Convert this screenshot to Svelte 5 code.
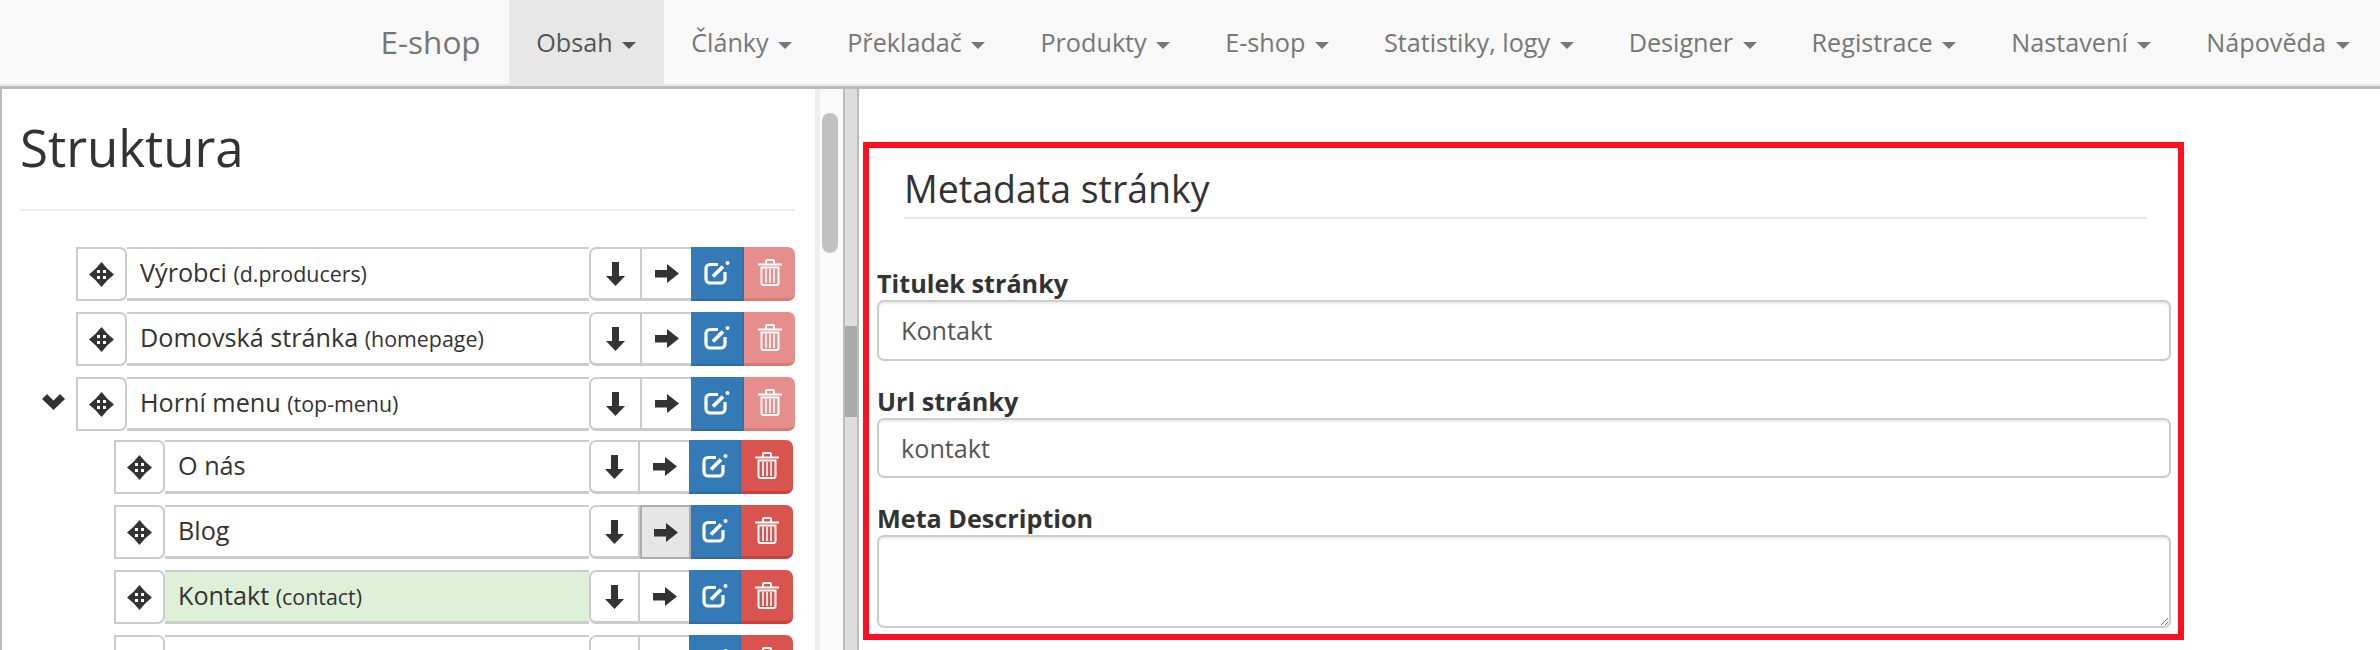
<script>
    const menu = ["Obsah", "Články", "Překladač", "Produkty", "E-shop", "Statistiky, logy", "Designer", "Registrace", "Nastavení", "Nápověda"];

    const topRows = [
        { name: "Výrobci", code: "d.producers" },
        { name: "Domovská stránka", code: "homepage" },
        { name: "Horní menu", code: "top-menu", open: true },
    ];

    const childRows = [
        { name: "O nás" },
        { name: "Blog", hover: true },
        { name: "Kontakt", code: "contact", active: true },
        { name: "" },
    ];
</script>

{#snippet row(item, locked)}
    <div class="row" class:locked>
        {#if item.open}
            <svg class="chevron" width="23" height="16" viewBox="0 0 23 16">
                <path d="M0 5 L5 0 L11.5 6.5 L18 0 L23 5 L11.5 16 Z" fill="#333" />
            </svg>
        {/if}
        <span class="handle">
            <svg width="25" height="25" viewBox="0 0 25 25">
                <path
                    d="M12.5 0 L19.5 8 H14 V11 H17 V5.5 L25 12.5 L17 19.5 V14 H14 V17 H19.5 L12.5 25 L5.5 17 H11 V14 H8 V19.5 L0 12.5 L8 5.5 V11 H11 V8 H5.5 Z"
                    fill="#333"
                />
            </svg>
        </span>
        <span class="name" class:active={item.active}>
            {item.name}
            {#if item.code}<small>({item.code})</small>{/if}
        </span>
        <span class="btn first">
            <svg width="19" height="24" viewBox="0 0 19 24">
                <path d="M6 0 H13 V14 H19 L9.5 24 L0 14 H6 Z" fill="#333" />
            </svg>
        </span>
        <span class="btn arrow" class:hover={item.hover}>
            <svg width="24" height="19" viewBox="0 0 24 19">
                <path d="M0 6 H12 V0 L24 9.5 L12 19 V13.5 H0 Z" fill="#333" />
            </svg>
        </span>
        <span class="btn edit">
            <svg width="26" height="24" viewBox="0 0 26 24" fill="none" stroke="#fff">
                <path d="M14 3.5 H6 a4 4 0 0 0 -4 4 V18 a4 4 0 0 0 4 4 H17 a4 4 0 0 0 4 -4 V11" stroke-width="3.2" />
                <path d="M9 15.5 L19 5.5" stroke-width="3.8" />
                <circle cx="23.5" cy="2" r="2" fill="#fff" stroke="none" />
            </svg>
        </span>
        <span class="btn trash">
            <svg width="24" height="27" viewBox="0 0 24 27" fill="none" stroke="#fff" stroke-width="2">
                <path d="M0 5.5 H24 M8 5 V2 a1 1 0 0 1 1 -1 H15 a1 1 0 0 1 1 1 V5" />
                <path d="M3.5 8.5 V24 a2 2 0 0 0 2 2 H18.5 a2 2 0 0 0 2 -2 V8.5 Z" />
                <path d="M8 10 V24 M12 10 V24 M16 10 V24" stroke-width="1.6" />
            </svg>
        </span>
    </div>
{/snippet}

<nav class="navbar">
    <span class="brand">E-shop</span>
    {#each menu as label, i}
        <span class="nav-item" class:current={i === 0}>{label} <i class="caret"></i></span>
    {/each}
</nav>

<main class="page">
    <section class="tree-panel">
        <div class="tree">
            <h1>Struktura</h1>
            <div class="rows">
                {#each topRows as item}
                    {@render row(item, true)}
                {/each}
            </div>
            <div class="rows children">
                {#each childRows as item}
                    {@render row(item, false)}
                {/each}
            </div>
        </div>
        <div class="track"><div class="thumb"></div></div>
    </section>

    <div class="splitter"><div class="splitter-thumb"></div></div>

    <section class="detail">
        <form class="meta-box">
            <h3>Metadata stránky</h3>
            <label for="title">Titulek stránky</label>
            <input id="title" type="text" value="Kontakt" />
            <label for="url">Url stránky</label>
            <input id="url" type="text" value="kontakt" />
            <label for="desc">Meta Description</label>
            <textarea id="desc"></textarea>
        </form>
    </section>
</main>

<style>
    :global(body) {
        overflow: hidden;
        background: #fff;
        font-family: "Open Sans", sans-serif;
        color: #333;
    }

    .navbar {
        display: flex;
        justify-content: flex-end;
        align-items: stretch;
        height: 86px;
        padding-right: 3px;
        background: #f8f8f8;
        border-bottom: 3px solid #bbb;
        box-shadow: inset 0 -2px 0 #e7e7e7;
    }

    .brand {
        padding: 23px 28px 0 0;
        font-size: 31.5px;
        line-height: 38px;
        color: #777;
    }

    .nav-item {
        padding: 0 27.5px;
        font-size: 25.2px;
        line-height: 84px;
        color: #777;
        white-space: nowrap;
    }

    .nav-item.current {
        height: 86px;
        background: #e7e7e7;
        color: #555;
    }

    .caret {
        display: inline-block;
        margin-left: 3px;
        vertical-align: middle;
        border-top: 7px solid;
        border-left: 7px solid transparent;
        border-right: 7px solid transparent;
    }

    .page {
        display: flex;
        height: 561px;
        overflow: hidden;
    }

    .tree-panel {
        display: flex;
        flex: none;
        width: 845px;
        border-left: 2px solid #bbb;
        box-sizing: border-box;
    }

    .tree {
        flex: none;
        width: 818px;
        box-sizing: border-box;
        padding: 0 20px 0 18px;
        border-right: 5px solid #eee;
    }

    h1 {
        margin: 0;
        padding: 26px 0 30px;
        font-size: 51px;
        line-height: 64px;
        font-weight: 400;
        border-bottom: 2px solid #eee;
    }

    .rows {
        display: flex;
        flex-direction: column;
        gap: 11px;
    }

    .tree > .rows:first-of-type {
        margin-top: 36px;
    }

    .rows.children {
        margin-top: 9px;
        padding-left: 38px;
        padding-right: 2px;
    }

    .row {
        position: relative;
        display: flex;
        height: 54px;
        margin-left: 56px;
        box-sizing: border-box;
    }

    .chevron {
        position: absolute;
        left: -34px;
        top: 17px;
    }

    .handle {
        display: flex;
        flex: none;
        align-items: center;
        justify-content: center;
        width: 51px;
        box-sizing: border-box;
        background: #fff;
        border: 2px solid #ccc;
        border-radius: 0 7px 7px 0;
    }

    .name {
        flex: 1;
        min-width: 0;
        padding-left: 13px;
        font-size: 25.2px;
        line-height: 47px;
        border-top: 2px solid #ccc;
        border-bottom: 3px solid #ccc;
        white-space: nowrap;
    }

    .name small {
        font-size: 21.4px;
    }

    .name.active {
        background: #dff0d8;
    }

    .btn {
        display: flex;
        flex: none;
        align-items: center;
        justify-content: center;
        box-sizing: border-box;
        background: #fff;
        border-top: 2px solid #ccc;
        border-bottom: 3px solid #ccc;
        border-right: 2px solid #ccc;
    }

    .btn.first {
        width: 53px;
        border-left: 2px solid #ccc;
        border-radius: 7px 0 0 7px;
    }

    .btn.arrow {
        width: 49px;
        border-right: 0;
    }

    .btn.hover {
        position: relative;
        z-index: 1;
        width: 51px;
        margin-right: -2px;
        background: #e6e6e6;
        border: 2px solid #adadad;
    }

    .btn.edit {
        width: 53px;
        background: #337ab7;
        border: 0;
        border-bottom: 2px solid #2e6da4;
        border-right: 1px solid #2e6da4;
    }

    .btn.trash {
        width: 51px;
        background: #d9534f;
        border: 0;
        border-bottom: 3px solid #c9403c;
        border-radius: 0 7px 7px 0;
    }

    .children .btn.first {
        width: 51px;
    }

    .children .btn.edit {
        width: 52px;
    }

    .children .btn.trash {
        width: 52px;
    }

    .locked .btn.trash {
        background: #e58e8c;
        border-bottom-color: #d97a78;
    }

    .track {
        flex: 1;
        background: #fafafa;
        border-right: 2px solid #bbb;
        padding: 24px 5px 0 2px;
    }

    .thumb {
        height: 140px;
        background: #c1c1c1;
        border-radius: 8px;
    }

    .splitter {
        flex: none;
        width: 12px;
        background: #ddd;
    }

    .splitter-thumb {
        height: 91px;
        margin-top: 237px;
        background: #aaa;
    }

    .detail {
        flex: 1;
        border-left: 2px solid #bbb;
        padding: 53px 0 0 4px;
    }

    .meta-box {
        display: flex;
        flex-direction: column;
        width: 1321px;
        height: 498px;
        box-sizing: border-box;
        padding: 0 7px 0 8px;
        border: 6px solid #ff1020;
    }

    h3 {
        margin: 0 24px 0 27px;
        padding: 18px 0 6px;
        font-size: 37.5px;
        line-height: 45px;
        font-weight: 400;
        border-bottom: 2px solid #e5e5e5;
    }

    label {
        margin-top: 24px;
        font-size: 25.2px;
        line-height: 33px;
        font-weight: 700;
    }

    h3 + label {
        margin-top: 48px;
    }

    input,
    textarea {
        display: block;
        width: 100%;
        box-sizing: border-box;
        margin: 0;
        padding: 0 22px;
        font-family: inherit;
        font-size: 25.2px;
        color: #555;
        background: #fff;
        border: 2px solid #ccc;
        border-radius: 7px;
        box-shadow: inset 0 2px 2px rgba(0, 0, 0, 0.075);
        outline: none;
    }

    input {
        height: 60.5px;
    }

    textarea {
        height: 93px;
    }
</style>
